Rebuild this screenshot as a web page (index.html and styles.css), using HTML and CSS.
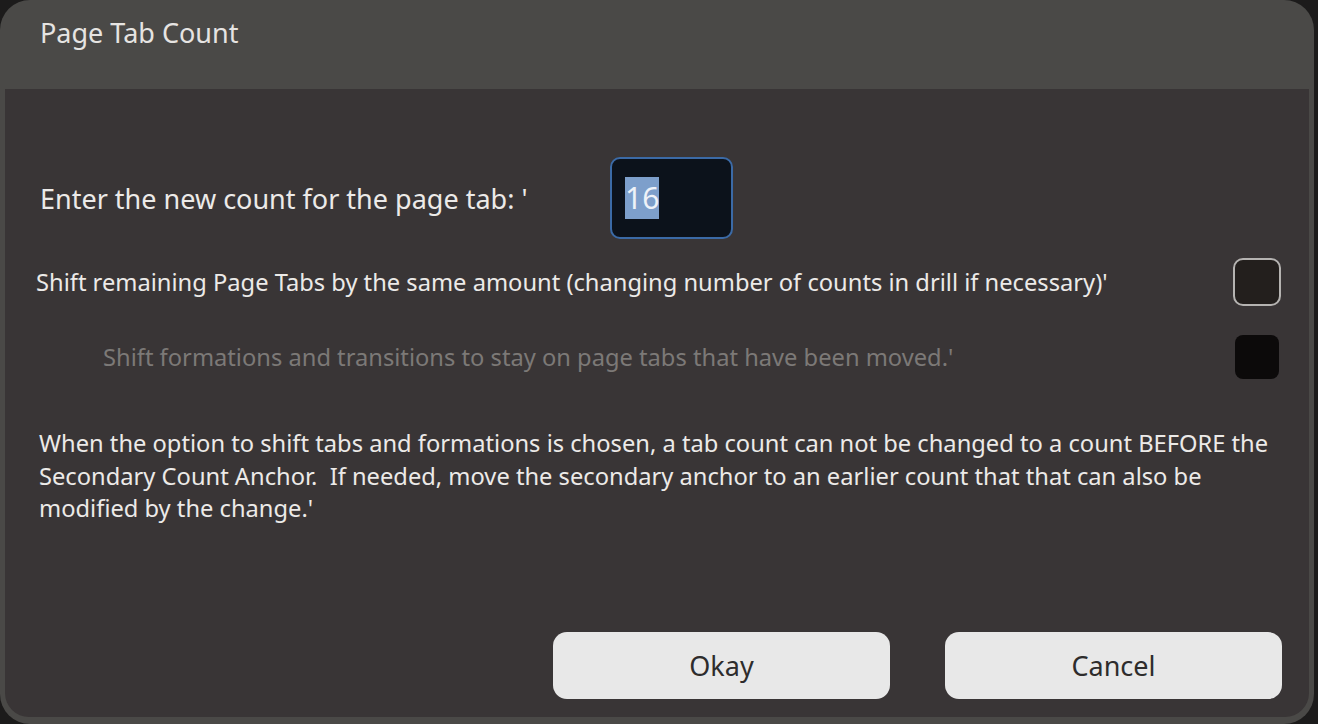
FILE: index.html
```html
<!DOCTYPE html>
<html>
<head>
<meta charset="utf-8">
<link rel="stylesheet" href="styles.css">
</head>
<body>
<div class="dialog">
  <div class="header">
    <div class="title">Page Tab Count</div>
  </div>
  <div class="content">
    <div class="row-count">
      <div class="count-label">Enter the new count for the page tab: '</div>
      <div class="count-input"><span class="sel">16</span></div>
    </div>
    <div class="row-shift">
      <div class="shift-label">Shift remaining Page Tabs by the same amount (changing number of counts in drill if necessary)'</div>
      <div class="check check-on"></div>
    </div>
    <div class="row-sub">
      <div class="sub-label">Shift formations and transitions to stay on page tabs that have been moved.'</div>
      <div class="check check-off"></div>
    </div>
    <p class="note">When the option to shift tabs and formations is chosen, a tab count can not be changed to a count BEFORE the Secondary Count Anchor.&nbsp; If needed, move the secondary anchor to an earlier count that that can also be modified by the change.'</p>
    <div class="buttons">
      <div class="btn btn-okay">Okay</div>
      <div class="btn btn-cancel">Cancel</div>
    </div>
  </div>
</div>
</body>
</html>
```
FILE: styles.css
```css
html, body {
  margin: 0;
  padding: 0;
  width: 1318px;
  height: 724px;
  overflow: hidden;
  background: #1c1b1b;
  font-family: "Noto Sans", "Open Sans", sans-serif;
}
.dialog {
  width: 1314px;
  height: 724px;
  box-sizing: border-box;
  background: #4a4947;
  border-radius: 30px;
  padding: 0 5px 7px 5px;
  display: flex;
  flex-direction: column;
}
.header {
  height: 89px;
  flex: none;
  display: flex;
  align-items: flex-start;
  padding-left: 35px;
}
.title {
  margin-top: 14px;
  font-size: 27px;
  line-height: 38px;
  color: #e6e4e2;
}
.content {
  flex: 1;
  background: #393536;
  border-radius: 0 0 24px 24px;
  display: flex;
  flex-direction: column;
  color: #eceae8;
}
.row-count {
  display: flex;
  align-items: center;
  margin-top: 68px;
  padding-left: 35px;
}
.count-label {
  font-size: 27px;
  width: 570px;
}
.count-input {
  width: 123px;
  height: 82px;
  box-sizing: border-box;
  background: #0c121b;
  border: 2px solid #3b6aa6;
  border-radius: 10px;
  display: flex;
  align-items: center;
  padding-left: 13px;
}
.sel {
  background: #7d9fcb;
  color: #eef2f8;
  font-size: 30px;
  line-height: 42px;
}
.row-shift {
  display: flex;
  align-items: center;
  justify-content: space-between;
  margin-top: 19px;
  padding-left: 31px;
  padding-right: 28px;
}
.shift-label, .sub-label {
  font-size: 23.7px;
}
.check {
  box-sizing: border-box;
  border-radius: 10px;
}
.check-on {
  width: 48px;
  height: 48px;
  background: #231f1d;
  border: 2px solid #b5b3b1;
}
.check-off {
  width: 44px;
  height: 44px;
  background: #0c0a0a;
  border-radius: 8px;
  margin-right: 2px;
}
.row-sub {
  display: flex;
  align-items: center;
  justify-content: space-between;
  margin-top: 29px;
  padding-left: 98px;
  padding-right: 28px;
}
.sub-label {
  color: #7c7977;
}
.note {
  margin: 48px 0 0 0;
  padding-left: 34px;
  padding-right: 34px;
  font-size: 23.7px;
  line-height: 32.5px;
}
.buttons {
  margin-top: auto;
  margin-bottom: 18px;
  display: flex;
  justify-content: flex-end;
  gap: 55px;
  padding-right: 27px;
}
.btn {
  width: 337px;
  height: 67px;
  background: #e8e8e8;
  border-radius: 14px;
  display: flex;
  align-items: center;
  justify-content: center;
  font-size: 27px;
  color: #2e2c2c;
}
```
